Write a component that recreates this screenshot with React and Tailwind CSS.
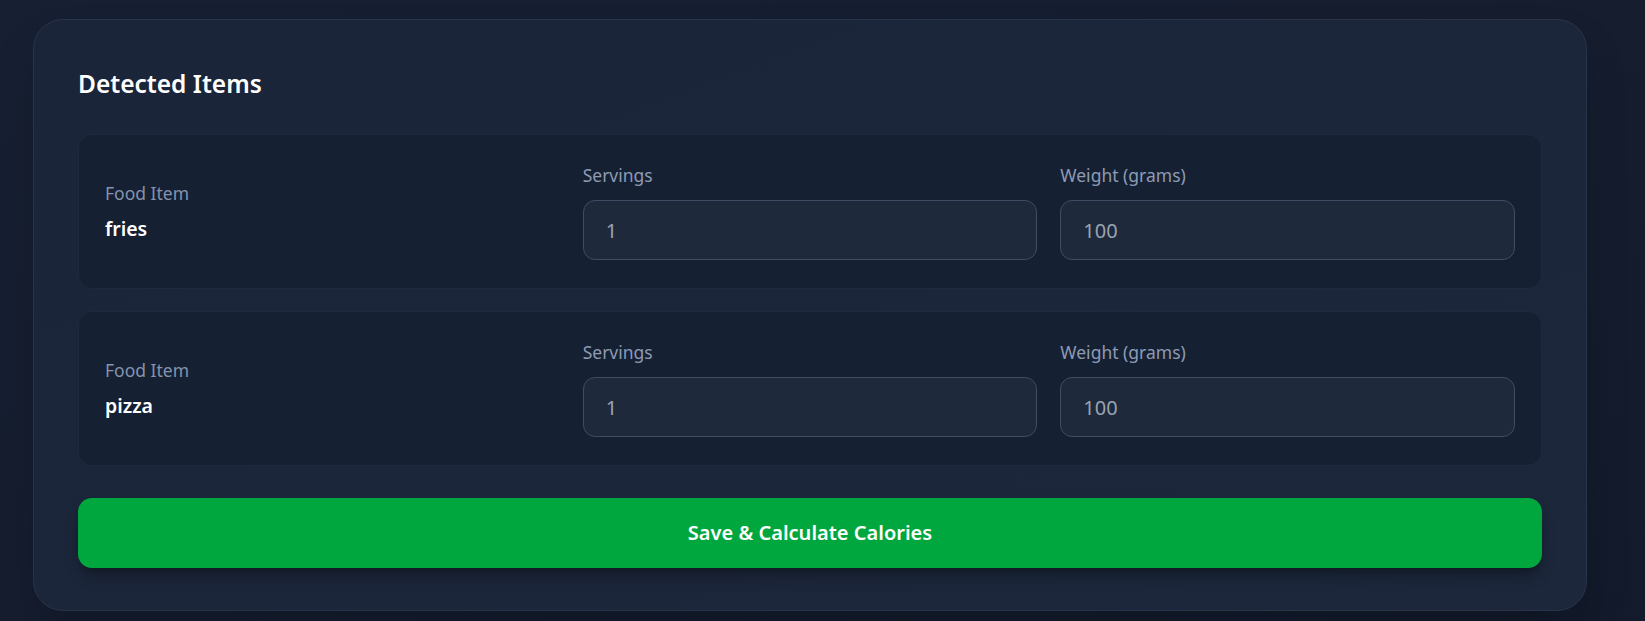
import React from "react";

function ItemRow({ name }) {
  return (
    <div className="grid grid-cols-3 gap-x-[23px] rounded-[14px] border border-[#1e293c] bg-[#162033] px-[26px] pt-[28px] pb-[28px]">
      <div className="flex flex-col justify-center">
        <div className="text-[17.5px] leading-[25px] text-[#8494ad]">Food Item</div>
        <div className="mt-[9px] text-[19.5px] leading-[28px] font-semibold text-white">{name}</div>
      </div>
      <div className="flex flex-col">
        <label className="text-[17.5px] leading-[25px] text-[#8d9bb3]">Servings</label>
        <input
          readOnly
          value="1"
          className="mt-[12px] h-[60px] w-full rounded-[12px] border border-[#3f4c63] bg-[#1e293c] px-[22px] text-[20px] text-[#9aa3b2] outline-none"
        />
      </div>
      <div className="flex flex-col">
        <label className="text-[17.5px] leading-[25px] text-[#8d9bb3]">Weight (grams)</label>
        <input
          readOnly
          value="100"
          className="mt-[12px] h-[60px] w-full rounded-[12px] border border-[#3f4c63] bg-[#1e293c] px-[22px] text-[20px] text-[#9aa3b2] outline-none"
        />
      </div>
    </div>
  );
}

export default function App() {
  return (
    <div
      className="h-[621px] w-full overflow-hidden bg-gradient-to-br from-[#172033] via-[#151d2f] to-[#121a2b] pt-[19px] pl-[33px]"
      style={{ fontFamily: '"Noto Sans", "Open Sans", sans-serif' }}
    >
      <div className="w-[1554px] rounded-[30px] border border-[#29344a] bg-gradient-to-br from-[#1b2539] to-[#1c273b] px-[44px] pt-[44px] pb-[42px] shadow-2xl">
        <h2 className="text-[24.5px] leading-[40px] font-semibold text-white">Detected Items</h2>
        <div className="mt-[30px] flex flex-col gap-[22px]">
          <ItemRow name="fries" />
          <ItemRow name="pizza" />
        </div>
        <button className="mt-[32px] flex h-[70px] w-full items-center justify-center rounded-[14px] bg-[#00a63e] text-[20px] font-semibold text-white shadow-lg shadow-black/30">
          Save &amp; Calculate Calories
        </button>
      </div>
    </div>
  );
}
